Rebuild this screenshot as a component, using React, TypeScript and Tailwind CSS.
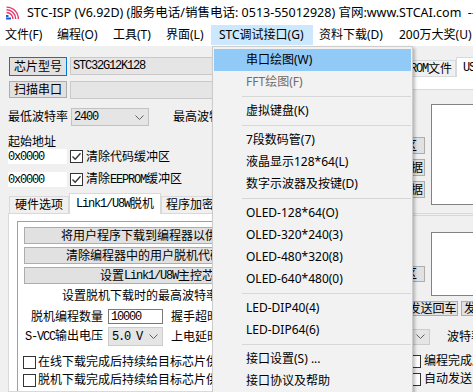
import React from 'react'

const mono = "font-['Liberation_Mono','Noto_Sans_CJK_SC',monospace] text-[12px] tracking-[-1.2px]"

function Chevron() {
  return (
    <svg width="9" height="5" viewBox="0 0 9 5" className="shrink-0">
      <path d="M0.5 0.5 L4.5 4.5 L8.5 0.5" fill="none" stroke="#606060" strokeWidth="1" />
    </svg>
  )
}

function Check({ checked }: { checked?: boolean }) {
  return (
    <div className="w-[13px] h-[13px] border border-[#333333] bg-white flex items-center justify-center shrink-0">
      {checked && (
        <svg width="11" height="11" viewBox="0 0 11 11">
          <path d="M1.5 5.5 L4.2 8.3 L9.5 2.3" fill="none" stroke="#333333" strokeWidth="1.3" />
        </svg>
      )}
    </div>
  )
}

function AppIcon() {
  return (
    <svg width="14" height="14" viewBox="0 0 14 14" className="shrink-0">
      <path d="M1.5 6.5 A6.5 6.5 0 0 1 8 13" fill="none" stroke="#e8336b" strokeWidth="1.4" />
      <path d="M1.5 3.8 A9.2 9.2 0 0 1 10.7 13" fill="none" stroke="#e8336b" strokeWidth="1.4" />
      <path d="M1.5 1.1 A11.9 11.9 0 0 1 13.4 13" fill="none" stroke="#e8336b" strokeWidth="1.4" />
      <rect x="1" y="9" width="2.5" height="2" fill="#1d5fcf" />
      <rect x="1" y="11.5" width="5" height="2" fill="#1d5fcf" />
    </svg>
  )
}

const menuBar = [
  { t: '文件(F)', w: 'w-[51px] pl-[5px]' },
  { t: '编程(O)', w: 'w-[56px] pl-[6px]' },
  { t: '工具(T)', w: 'w-[52px] pl-[6px]' },
  { t: '界面(L)', w: 'w-[52px] pl-[7px]' },
  { t: 'STC调试接口(G)', w: 'w-[102px] pl-[8px]', open: true },
  { t: '资料下载(D)', w: 'w-[79px] pl-[6px]' },
  { t: '200万大奖(U)', w: 'w-[90px] pl-[7px]' },
]

type Item = { t: string; active?: boolean; disabled?: boolean } | null

const items: Item[] = [
  { t: '串口绘图(W)', active: true },
  { t: 'FFT绘图(F)', disabled: true },
  null,
  { t: '虚拟键盘(K)' },
  null,
  { t: '7段数码管(7)' },
  { t: '液晶显示128*64(L)' },
  { t: '数字示波器及按键(D)' },
  null,
  { t: 'OLED-128*64(O)' },
  { t: 'OLED-320*240(3)' },
  { t: 'OLED-480*320(8)' },
  { t: 'OLED-640*480(0)' },
  null,
  { t: 'LED-DIP40(4)' },
  { t: 'LED-DIP64(6)' },
  null,
  { t: '接口设置(S) ...' },
  { t: '接口协议及帮助' },
]

const btn = 'border border-[#adadad] bg-[#e1e1e1] flex items-center'

export default function App() {
  return (
    <div className="relative w-[473px] h-[392px] overflow-hidden bg-[#f0f0f0] text-black text-[12px] leading-[16px] font-['Noto_Sans','Noto_Sans_CJK_SC',sans-serif]">
      {/* title */}
      <div className="h-[25px] bg-white flex items-center pl-[5px] whitespace-pre overflow-hidden">
        <AppIcon />
        <span className="ml-[8px] text-[12.5px]">STC-ISP (V6.92D) (服务电话/销售电话: 0513-55012928) 官网:www.STCAI.com  --</span>
      </div>

      {/* menu bar */}
      <div className="h-[21px] bg-white flex">
        {menuBar.map(m => (
          <div key={m.t} className={`${m.w} shrink-0 h-[20px] flex items-center whitespace-nowrap ${m.open ? 'bg-[#cce8ff]' : ''}`}>
            {m.t}
          </div>
        ))}
      </div>

      <div className="flex h-[346px]">
        {/* left panel */}
        <div className="w-[345px] shrink-0 flex flex-col pl-[8px]">
          <div className="mt-[11px] flex items-start">
            <div className="ml-[1px] w-[58px] h-[19px] border border-[#0078d7] bg-[#e1e1e1] flex items-center justify-center">芯片型号</div>
            <div className="ml-[3px] flex-1 h-[18px] bg-[#e5e5e5] border border-[#c9c9c9] flex items-center pl-[2px]">
              <span className={mono}>STC32G12K128</span>
            </div>
          </div>
          <div className="mt-[5px] flex items-start">
            <div className={`ml-[1px] w-[58px] h-[17px] ${btn} justify-center`}>扫描串口</div>
            <div className="ml-[3px] flex-1 h-[18px] bg-[#e5e5e5] border border-[#c9c9c9]" />
          </div>
          <div className="mt-[9px] h-[18px] flex items-center">
            <span className="w-[63px] shrink-0">最低波特率</span>
            <div className="w-[78px] h-[18px] bg-[#e5e5e5] border border-[#c2c2c2] flex items-center justify-between pl-[2px] pr-[4px]">
              <span className={mono}>2400</span>
              <Chevron />
            </div>
            <span className="ml-[24px] whitespace-nowrap">最高波特率</span>
          </div>
          <div className="mt-[8px] h-[15px] leading-[15px]">起始地址</div>
          <div className="h-[15px] flex items-center">
            <div className="w-[59px] h-[15px] bg-white flex items-center">
              <span className={mono}>0x0000</span>
            </div>
            <div className="ml-[3px]"><Check checked /></div>
            <span className="ml-[3px] whitespace-nowrap">清除代码缓冲区</span>
          </div>
          <div className="mt-[8px] h-[15px] flex items-center">
            <div className="w-[59px] h-[15px] bg-white flex items-center">
              <span className={mono}>0x0000</span>
            </div>
            <div className="ml-[3px]"><Check checked /></div>
            <span className="ml-[3px] whitespace-nowrap">清除<span className={mono}>EEPROM</span>缓冲区</span>
          </div>

          {/* tabs */}
          <div className="mt-[6px] ml-[1px] h-[20px] flex items-end">
            <div className="w-[60px] h-[17px] border border-b-0 border-[#d9d9d9] bg-[#f0f0f0] flex items-center justify-center">硬件选项</div>
            <div className="relative z-10 -mb-[1px] w-[92px] h-[21px] border border-b-0 border-[#d9d9d9] bg-white flex items-center justify-center">
              <span className={mono}>Link1/U8W</span>脱机
            </div>
            <div className="w-[90px] h-[17px] border border-b-0 border-[#d9d9d9] bg-[#f0f0f0] flex items-center pl-[4px] whitespace-nowrap">程序加密后传输</div>
          </div>
          <div className="flex-1 bg-white border border-[#d9d9d9] pl-[8px] pt-[7px]">
            <div className="h-full border-l border-t border-[#a0a0a0] pl-[6px] pt-[5px] flex flex-col">
              <div className="flex flex-col gap-[3px]">
                <div className={`h-[17px] ${btn} pl-[36px] whitespace-nowrap`}>将用户程序下载到编程器以供脱机下载</div>
                <div className={`h-[17px] ${btn} pl-[41px] whitespace-nowrap`}>清除编程器中的用户脱机代码</div>
                <div className={`h-[17px] ${btn} pl-[75px] whitespace-nowrap`}>设置<span className={mono}>Link1/U8W</span>主控芯片选项</div>
              </div>
              <div className="mt-[4px] ml-[38px] h-[16px] whitespace-nowrap">设置脱机下载时的最高波特率</div>
              <div className="mt-[5px] h-[15px] flex items-center">
                <span className="ml-[7px] w-[77px] shrink-0 whitespace-nowrap">脱机编程数量</span>
                <div className="w-[55px] h-[15px] border border-[#7a7a7a] bg-white flex items-center pl-[2px]">
                  <span className={mono}>10000</span>
                </div>
                <span className="ml-[8px] whitespace-nowrap">握手超时</span>
              </div>
              <div className="mt-[3px] h-[19px] flex items-center">
                <span className="ml-[1px] w-[83px] shrink-0 whitespace-nowrap"><span className={mono}>S-VCC</span>输出电压</span>
                <div className="w-[55px] h-[19px] border border-[#cccccc] bg-[#e5e5e5] flex items-center justify-between pl-[3px] pr-[4px]">
                  <span className={mono}>5.0 V</span>
                  <Chevron />
                </div>
                <span className="ml-[8px] whitespace-nowrap">上电延时</span>
              </div>
              <div className="mt-[7px] -ml-[1px] h-[18px] flex items-center">
                <Check />
                <span className="ml-[2px] whitespace-nowrap">在线下载完成后持续给目标芯片供电</span>
              </div>
              <div className="-ml-[1px] h-[18px] flex items-center">
                <Check />
                <span className="ml-[2px] whitespace-nowrap">脱机下载完成后持续给目标芯片供电</span>
              </div>
            </div>
          </div>
        </div>

        {/* right panel */}
        <div className="flex-1 flex flex-col">
          <div className="mt-[11px] h-[19px] flex items-end">
            <div className="ml-[43px] w-[68px] h-[16px] border border-b-0 border-[#d9d9d9] bg-[#f0f0f0] flex items-center justify-center whitespace-nowrap">
              <span className={mono}>EEPROM</span>文件
            </div>
            <div className="relative z-10 -mb-[1px] flex-1 h-[20px] border border-b-0 border-r-0 border-[#d9d9d9] bg-white flex items-center pl-[6px] whitespace-nowrap overflow-hidden">
              <span className={mono}>USB-CDC</span>
            </div>
          </div>
          <div className="h-[14px] bg-white border border-r-0 border-[#d9d9d9]" />

          <div className="mt-[14px] flex">
            <div className="ml-[4px] w-[76px] pt-[33px] flex flex-col gap-[5px]">
              <div className={`h-[17px] ${btn} justify-center whitespace-nowrap`}>清空接收区</div>
              <div className={`h-[17px] ${btn} justify-center whitespace-nowrap`}>复制接收数据</div>
              <div className={`h-[17px] ${btn} justify-center whitespace-nowrap`}>保存接收数据</div>
            </div>
            <div className="ml-[6px] flex-1 h-[101px] border border-r-0 border-[#828282] bg-white" />
          </div>

          <div className="mt-[8px] h-[3px] border-y border-[#c7dced]" />

          <div className="mt-[16px] flex">
            <div className="ml-[4px] w-[76px] pt-[34px]">
              <div className={`h-[16px] ${btn} justify-center whitespace-nowrap`}>清空发送区</div>
            </div>
            <div className="ml-[6px] flex-1 h-[64px] border border-r-0 border-[#828282] bg-white" />
          </div>

          <div className="mt-[5px] h-[15px] flex overflow-hidden">
            <div className={`ml-[62px] w-[51px] shrink-0 ${btn} justify-center whitespace-nowrap`}>发送回车</div>
            <div className={`ml-[3px] w-[60px] shrink-0 ${btn} pl-[2px] whitespace-nowrap`}>发送</div>
          </div>

          <div className="mt-[13px] h-[15px] flex items-center">
            <div className="ml-[10px] w-[75px] h-[16px] shrink-0 border border-[#cccccc] bg-[#e5e5e5] flex items-center justify-end pr-[4px]">
              <Chevron />
            </div>
            <span className="ml-[17px] whitespace-nowrap">波特率</span>
          </div>

          <div className="mt-[8px] h-[18px] flex items-center">
            <div className="ml-[63px]"><Check /></div>
            <span className="ml-[3px] whitespace-nowrap">编程完成后</span>
          </div>
          <div className="h-[18px] flex items-center">
            <div className="ml-[63px]"><Check /></div>
            <span className="ml-[3px] whitespace-nowrap">自动发送</span>
          </div>
        </div>
      </div>

      {/* dropdown */}
      <div className="absolute left-[212px] top-[46px] w-[201px] h-[360px] bg-[#f2f2f2] border border-[#cccccc] px-[1px] pt-[2px] shadow-[2px_2px_3px_rgba(0,0,0,0.25)]">
        {items.map((it, i) =>
          it === null ? (
            <div key={i} className="h-[7px] pt-[3px] pl-[28px]">
              <div className="h-px bg-[#d7d7d7]" />
            </div>
          ) : (
            <div
              key={i}
              className={`h-[22px] flex items-center pl-[32px] whitespace-nowrap ${it.active ? 'bg-[#91c9f7]' : ''} ${it.disabled ? 'text-[#6d6d6d]' : ''}`}
            >
              {it.t}
            </div>
          )
        )}
      </div>
    </div>
  )
}
